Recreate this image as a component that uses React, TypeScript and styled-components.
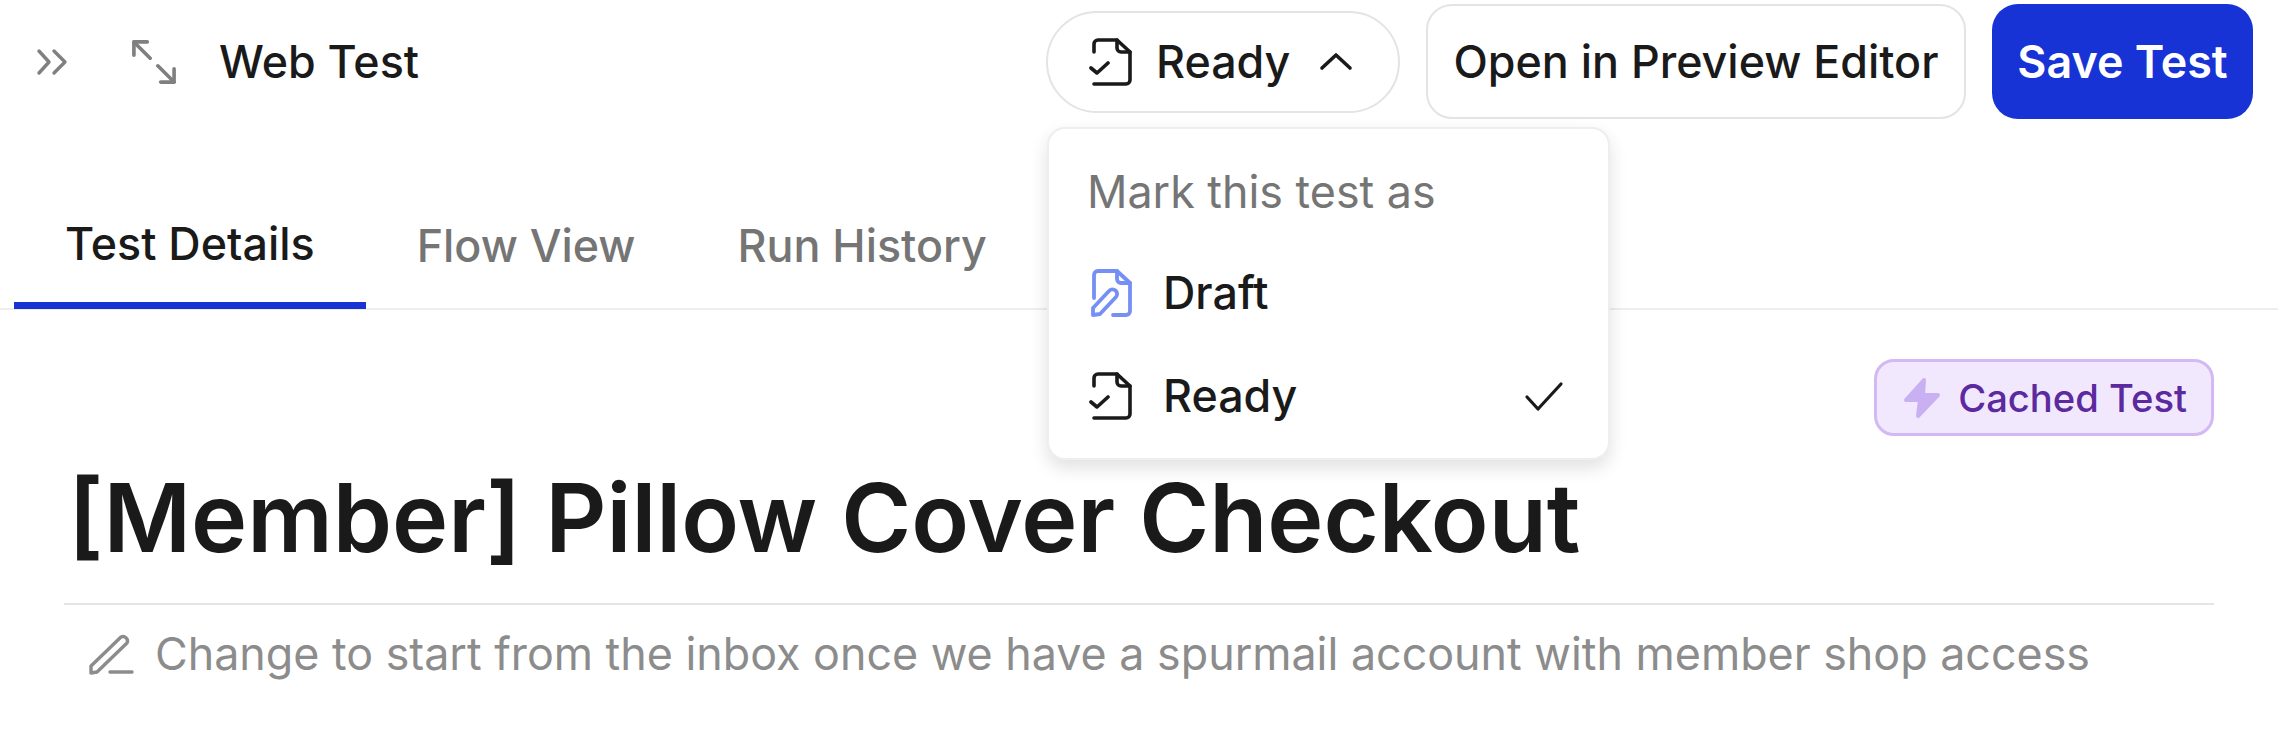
import React from "react"
import styled, { createGlobalStyle } from "styled-components"

const GlobalStyle = createGlobalStyle`
  html, body {
    margin: 0;
    padding: 0;
    background: #ffffff;
    overflow: hidden;
  }
  body {
    font-family: "Inter", "Liberation Sans", sans-serif;
    color: #1a1a1a;
  }
`

const Page = styled.div`
  position: relative;
  width: 2278px;
  height: 730px;
  overflow: hidden;
`

const TopBar = styled.header`
  display: flex;
  align-items: center;
  height: 123px;
  padding: 0 25px 0 36px;
  box-sizing: border-box;
`

const IconButton = styled.span`
  display: inline-flex;
  color: #808080;
`

const ExpandButton = styled(IconButton)`
  margin-left: 64px;
`

const PageName = styled.div`
  margin-left: 43px;
  font-size: 44.8px;
  font-weight: 500;
  white-space: nowrap;
`

const Actions = styled.div`
  margin-left: auto;
  display: flex;
  align-items: center;
  gap: 26px;
`

const StatusPill = styled.button`
  display: flex;
  align-items: center;
  width: 354px;
  height: 102px;
  padding: 0 0 0 41px;
  box-sizing: border-box;
  background: #ffffff;
  border: 2px solid #e6e3e1;
  border-radius: 51px;
  color: #1a1a1a;
  font: 500 44.8px "Inter", sans-serif;
`

const StatusLabel = styled.span`
  margin-left: 23px;
`

const PillChevron = styled.span`
  display: inline-flex;
  margin-left: 29px;
`

const OutlineButton = styled.button`
  width: 540px;
  height: 115px;
  padding: 0;
  background: #ffffff;
  border: 2px solid #e6e3e1;
  border-radius: 26px;
  color: #1a1a1a;
  font: 500 44.8px "Inter", sans-serif;
  white-space: nowrap;
`

const PrimaryButton = styled.button`
  width: 261px;
  height: 115px;
  padding: 0;
  background: #1733d6;
  border: none;
  border-radius: 26px;
  color: #ffffff;
  font: 600 44.8px "Inter", sans-serif;
  white-space: nowrap;
`

const Tabs = styled.nav`
  display: flex;
  height: 187px;
  padding-left: 14px;
  box-sizing: border-box;
  border-bottom: 2px solid #eeeeec;
`

const Tab = styled.div<{ $active?: boolean }>`
  display: flex;
  align-items: center;
  height: 186px;
  padding: 63px 51px 0;
  box-sizing: border-box;
  font-size: 44.8px;
  font-weight: 500;
  white-space: nowrap;
  color: ${(p) => (p.$active ? "#1a1a1a" : "#757575")};
  border-bottom: ${(p) => (p.$active ? "7px solid #1733d6" : "4px solid transparent")};
`

const Content = styled.main`
  padding: 0 64px;
`

const BadgeRow = styled.div`
  display: flex;
  justify-content: flex-end;
  padding-top: 49px;
`

const Badge = styled.div`
  display: flex;
  align-items: center;
  gap: 17px;
  height: 77px;
  padding: 0 24px 0 26px;
  box-sizing: border-box;
  background: #f1e8fd;
  border: 3px solid #d3b9f3;
  border-radius: 20px;
  color: #5b2a9e;
  font-size: 38.2px;
  font-weight: 500;
  white-space: nowrap;
`

const Title = styled.h1`
  margin: 24px 0 0;
  padding: 0 0 27px 4px;
  font-size: 95px;
  line-height: 116px;
  font-weight: 600;
  color: #1a1a1a;
  border-bottom: 2px solid #e8e4e4;
`

const NoteRow = styled.div`
  display: flex;
  align-items: center;
  gap: 21px;
  padding: 22px 0 0 24px;
  font-size: 44.8px;
  color: #8c8c8c;
  white-space: nowrap;
  line-height: 54px;
`

const Menu = styled.div`
  position: absolute;
  left: 1047px;
  top: 127px;
  width: 563px;
  height: 333px;
  box-sizing: border-box;
  padding: 36px 38px 0;
  background: #ffffff;
  border: 2px solid #eeeeee;
  border-radius: 18px;
  box-shadow: 0 8px 18px rgba(0, 0, 0, 0.12);
`

const MenuHeading = styled.div`
  font-size: 44.8px;
  line-height: 54px;
  color: #757575;
`

const MenuList = styled.div`
  display: flex;
  flex-direction: column;
  gap: 47px;
  margin: 46px 0 0 2px;
`

const MenuItem = styled.div`
  display: flex;
  align-items: center;
  gap: 30px;
  height: 56px;
  font-size: 44.8px;
  font-weight: 500;
  color: #1a1a1a;
`

const MenuCheck = styled.span`
  display: inline-flex;
  margin-left: auto;
  margin-right: 6px;
`

const ChevronsRight = () => (
  <svg width="32" height="28" viewBox="0 0 32 28" fill="none" stroke="currentColor" strokeWidth="3.4" strokeLinecap="round" strokeLinejoin="round">
    <path d="M3 3l10 11L3 25" />
    <path d="M18 3l11 11-11 11" />
  </svg>
)

const ExpandArrows = () => (
  <svg width="44" height="44" viewBox="0 0 46 46" fill="none" stroke="currentColor" strokeWidth="3.8" strokeLinecap="round" strokeLinejoin="round">
    <path d="M2 16V2h14" />
    <path d="M2 2l17 17" />
    <path d="M44 30v14H30" />
    <path d="M44 44L27 27" />
  </svg>
)

const FileCheck = () => (
  <svg width="44" height="50" viewBox="0 0 44 50" fill="none" stroke="#1a1a1a" strokeWidth="3.6" strokeLinecap="round" strokeLinejoin="round">
    <path d="M5 15V7a4 4 0 0 1 4-4h19l13 12v28a4 4 0 0 1-4 4H5" />
    <path d="M28 3v8a4 4 0 0 0 4 4h9" />
    <path d="M2 31l6 5 11-10" />
  </svg>
)

const FileDraft = () => (
  <svg width="44" height="50" viewBox="0 0 44 50" fill="none" stroke="#7590f5" strokeWidth="3.8" strokeLinecap="round" strokeLinejoin="round">
    <path d="M5 30V7a4 4 0 0 1 4-4h19l13 12v28a4 4 0 0 1-4 4H24" />
    <path d="M28 3v8a4 4 0 0 0 4 4h9" />
    <path d="M4 40l16-17a4.5 4.5 0 0 1 7 6L11 46l-7 1z" />
  </svg>
)

const ChevronUp = () => (
  <svg width="34" height="21" viewBox="0 0 34 21" fill="none" stroke="#1a1a1a" strokeWidth="3.6" strokeLinecap="round" strokeLinejoin="round">
    <path d="M3 17L17 4l14 13" />
  </svg>
)

const CheckMark = () => (
  <svg width="40" height="31" viewBox="0 0 40 31" fill="none" stroke="#1a1a1a" strokeWidth="3.2" strokeLinecap="round" strokeLinejoin="round">
    <path d="M3 16l11 12L37 3" />
  </svg>
)

const Bolt = () => (
  <svg width="38" height="42" viewBox="0 0 38 42" fill="#c9b0f2" stroke="#c9b0f2" strokeWidth="4" strokeLinejoin="round">
    <path d="M21 3L3 23h14l-2 16 20-21H20z" />
  </svg>
)

const Pencil = () => (
  <svg width="46" height="42" viewBox="0 0 46 42" fill="none" stroke="#8c8c8c" strokeWidth="3.4" strokeLinecap="round" strokeLinejoin="round">
    <path d="M3 33L33 4a4.5 4.5 0 0 1 6 6L9 39l-6 1z" />
    <path d="M22 39h22" />
  </svg>
)

const App: React.FC = () => (
  <Page>
    <GlobalStyle />
    <TopBar>
      <IconButton>
        <ChevronsRight />
      </IconButton>
      <ExpandButton>
        <ExpandArrows />
      </ExpandButton>
      <PageName>Web Test</PageName>
      <Actions>
        <StatusPill>
          <FileCheck />
          <StatusLabel>Ready</StatusLabel>
          <PillChevron>
            <ChevronUp />
          </PillChevron>
        </StatusPill>
        <OutlineButton>Open in Preview Editor</OutlineButton>
        <PrimaryButton>Save Test</PrimaryButton>
      </Actions>
    </TopBar>
    <Tabs>
      <Tab $active>Test Details</Tab>
      <Tab>Flow View</Tab>
      <Tab>Run History</Tab>
    </Tabs>
    <Content>
      <BadgeRow>
        <Badge>
          <Bolt />
          Cached Test
        </Badge>
      </BadgeRow>
      <Title>[Member] Pillow Cover Checkout</Title>
      <NoteRow>
        <Pencil />
        Change to start from the inbox once we have a spurmail account with member shop access
      </NoteRow>
    </Content>
    <Menu>
      <MenuHeading>Mark this test as</MenuHeading>
      <MenuList>
        <MenuItem>
          <FileDraft />
          Draft
        </MenuItem>
        <MenuItem>
          <FileCheck />
          Ready
          <MenuCheck>
            <CheckMark />
          </MenuCheck>
        </MenuItem>
      </MenuList>
    </Menu>
  </Page>
)

export default App
